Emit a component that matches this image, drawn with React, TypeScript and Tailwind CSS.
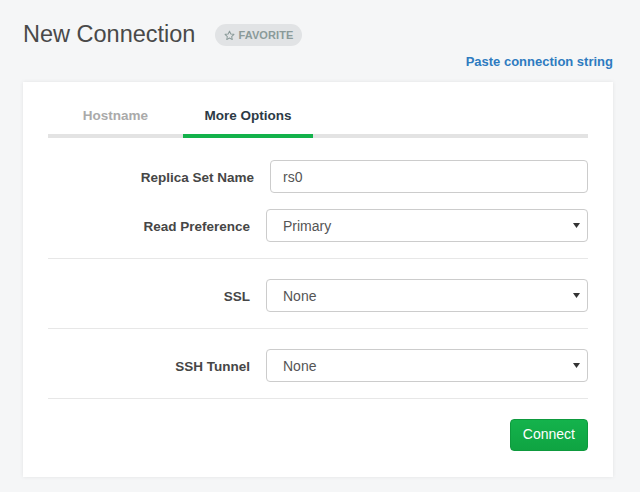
import { useState } from 'react';

function Caret() {
  return (
    <svg className="pointer-events-none absolute right-[7px] top-1/2 -mt-[2px]" width="7" height="5" viewBox="0 0 7 5">
      <path d="M0 0h7L3.5 5z" fill="#333" />
    </svg>
  );
}

function SelectBox({ value }: { value: string }) {
  return (
    <div className="relative flex h-[33px] flex-1 items-center rounded-[4px] border border-[#ccc] bg-white pl-4 pt-[2px] text-[14px] text-[#555]">
      {value}
      <Caret />
    </div>
  );
}

function Row({ label, labelWidth, children }: { label: string; labelWidth: string; children: React.ReactNode }) {
  return (
    <div className="flex h-[33px] items-center">
      <label className={`${labelWidth} mt-[3px] shrink-0 pr-4 text-right text-[13.5px] font-bold text-[#464646]`}>{label}</label>
      {children}
    </div>
  );
}

export default function App() {
  const [tab, setTab] = useState('options');

  return (
    <main className="h-[492px] w-[640px] overflow-hidden bg-[#f5f6f7] pl-[23px] pr-[27px] pt-[18px] font-['Liberation_Sans',Arial,sans-serif]">
      <div className="flex items-center">
        <h1 className="text-[23.5px] leading-[32px] text-[#494949]">New Connection</h1>
        <button className="ml-[20px] mt-[2px] flex h-[22px] items-center gap-[3px] rounded-full bg-[#e1e3e5] px-[9px] text-[11px] font-bold tracking-[0.1px] text-[#8a9a99]">
          <svg width="11" height="11" viewBox="0 0 24 24" fill="none" stroke="currentColor" strokeWidth="2.2" strokeLinejoin="round">
            <path d="M12 2.5l2.9 6.2 6.8.8-5 4.7 1.3 6.7L12 17.6l-6 3.3 1.3-6.7-5-4.7 6.8-.8z" />
          </svg>
          FAVORITE
        </button>
      </div>

      <div className="mt-[2px] flex justify-end">
        <a className="text-[13px] font-bold text-[#2e7bc0]">Paste connection string</a>
      </div>

      <section className="mt-[10px] bg-white px-[25px] pb-[26px] pt-[24px] shadow-[0_0_4px_rgba(0,0,0,0.08)]">
        <div className="flex border-b-4 border-[#e3e3e3]">
          <button
            onClick={() => setTab('hostname')}
            className={`-mb-1 w-[135px] border-b-4 pb-[8px] text-[13.5px] font-bold ${tab === 'hostname' ? 'border-[#13b24b] text-[#2c3a45]' : 'border-transparent text-[#aaa]'}`}
          >
            Hostname
          </button>
          <button
            onClick={() => setTab('options')}
            className={`-mb-1 w-[130px] border-b-4 pb-[8px] text-[13.5px] font-bold ${tab === 'options' ? 'border-[#13b24b] text-[#2c3a45]' : 'border-transparent text-[#aaa]'}`}
          >
            More Options
          </button>
        </div>

        <div className="pt-[22px]">
          <Row label="Replica Set Name" labelWidth="w-[222px]">
            <input
              defaultValue="rs0"
              className="h-[33px] flex-1 rounded-[4px] border border-[#ccc] px-3 pt-[2px] text-[14px] text-[#555] outline-none"
            />
          </Row>
          <div className="mt-[16px]">
            <Row label="Read Preference" labelWidth="w-[218px]">
              <SelectBox value="Primary" />
            </Row>
          </div>
          <hr className="mt-[16px] border-[#e7e7e7]" />
          <div className="pb-[16px] pt-[20px]">
            <Row label="SSL" labelWidth="w-[218px]">
              <SelectBox value="None" />
            </Row>
          </div>
          <hr className="border-[#e7e7e7]" />
          <div className="pb-[16px] pt-[20px]">
            <Row label="SSH Tunnel" labelWidth="w-[218px]">
              <SelectBox value="None" />
            </Row>
          </div>
          <hr className="border-[#e7e7e7]" />
          <div className="flex justify-end pt-[20px]">
            <button className="h-[32px] rounded-[4px] border border-[#0e9a3e] bg-gradient-to-b from-[#14b34c] to-[#0fa442] px-[12px] text-[14px] text-white">
              Connect
            </button>
          </div>
        </div>
      </section>
    </main>
  );
}
